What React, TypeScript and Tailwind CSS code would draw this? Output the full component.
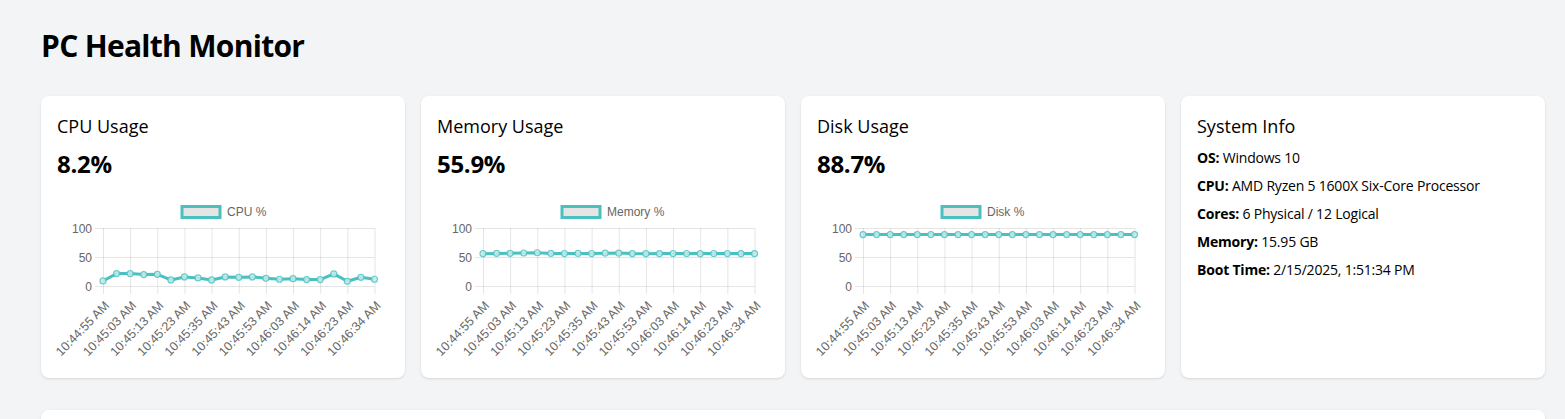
import React from "react";

const times = [
  "10:44:55 AM",
  "10:45:03 AM",
  "10:45:13 AM",
  "10:45:23 AM",
  "10:45:35 AM",
  "10:45:43 AM",
  "10:45:53 AM",
  "10:46:03 AM",
  "10:46:14 AM",
  "10:46:23 AM",
  "10:46:34 AM",
];

const cpuData = [8.7, 21.4, 21.4, 19.7, 20.2, 10.4, 15.6, 13.9, 10.4, 15.6, 15.0, 15.6, 13.3, 11.6, 12.7, 11.0, 11.0, 20.8, 8.1, 15.0, 11.6];
const memData = [55.8, 56.2, 56.4, 56.9, 57.3, 56.2, 56.0, 56.1, 56.0, 56.6, 56.7, 55.9, 55.8, 55.9, 56.0, 56.0, 55.9, 56.0, 56.0, 55.9, 55.9];
const diskData = Array.from({ length: 21 }, () => 88.7);

const TEAL = "rgb(75,192,192)";
const GRID = "rgba(0,0,0,0.1)";

function LineChart({ label, data }: { label: string; data: number[] }) {
  const left = 46;
  const right = 317.5;
  const top = 32;
  const bottom = 90;
  const step = (right - left) / (data.length - 1);
  const yOf = (v: number) => bottom - (v / 100) * (bottom - top);
  const pts = data.map((v, i) => `${left + i * step},${yOf(v)}`).join(" ");

  return (
    <svg
      width={332}
      height={166}
      viewBox="0 0 332 166"
      overflow="visible"
      style={{ fontFamily: "'Liberation Sans', Arial, sans-serif" }}
    >
      {/* legend */}
      <rect x={125} y={10.5} width={38} height={11} fill="rgba(0,0,0,0.1)" stroke={TEAL} strokeWidth={3} />
      <text x={170} y={20} fontSize={12} fill="#666">
        {label}
      </text>

      {/* horizontal grid */}
      {[0, 50, 100].map((v) => (
        <g key={v}>
          <line x1={left - 8} x2={right} y1={yOf(v) + 0.5} y2={yOf(v) + 0.5} stroke={GRID} />
          <text x={35} y={yOf(v) + 4.5} fontSize={12} fill="#666" textAnchor="end">
            {v}
          </text>
        </g>
      ))}

      {/* vertical grid + x labels */}
      {times.map((t, k) => {
        const x = left + k * 2 * step;
        return (
          <g key={t}>
            <line x1={x + 0.5} x2={x + 0.5} y1={top} y2={bottom + 8} stroke={GRID} />
            <text
              transform={`translate(${x + 4.5}, 108) rotate(-46)`}
              fontSize={12.5}
              fill="#666"
              textAnchor="end"
              dominantBaseline="middle"
            >
              {t}
            </text>
          </g>
        );
      })}

      <polyline points={pts} fill="none" stroke={TEAL} strokeWidth={3} strokeLinejoin="round" />
      {data.map((v, i) => (
        <circle
          key={i}
          cx={left + i * step}
          cy={yOf(v)}
          r={3}
          fill="rgba(200,235,235,0.85)"
          stroke="rgba(75,192,192,0.8)"
          strokeWidth={1.2}
        />
      ))}
    </svg>
  );
}

function UsageCard({ title, value, label, data }: { title: string; value: string; label: string; data: number[] }) {
  return (
    <div className="rounded-lg bg-white p-4 shadow">
      <h2 className="mb-2 text-lg font-medium leading-7 text-black">{title}</h2>
      <p className="mb-4 text-2xl font-bold leading-8 tracking-[-0.3px] text-black">{value}</p>
      <LineChart label={label} data={data} />
    </div>
  );
}

function SystemInfo() {
  const rows = [
    ["OS:", "Windows 10"],
    ["CPU:", "AMD Ryzen 5 1600X Six-Core Processor"],
    ["Cores:", "6 Physical / 12 Logical"],
    ["Memory:", "15.95 GB"],
    ["Boot Time:", "2/15/2025, 1:51:34 PM"],
  ];
  return (
    <div className="rounded-lg bg-white p-4 shadow">
      <h2 className="mb-2 text-lg font-medium leading-7 text-black">System Info</h2>
      <div className="flex flex-col gap-2">
        {rows.map(([k, v]) => (
          <p key={k} className="text-sm leading-5 tracking-[-0.2px] text-black">
            <span className="font-bold">{k}</span> {v}
          </p>
        ))}
      </div>
    </div>
  );
}

export default function App() {
  return (
    <div
      className="min-h-screen bg-gray-100 pl-[41px] pr-5 pt-[28px]"
      style={{ fontFamily: "'Open Sans', 'Noto Sans', sans-serif" }}
    >
      <h1 className="mb-8 text-3xl font-bold leading-9 tracking-[-0.7px] text-black">PC Health Monitor</h1>
      <div className="mb-8 grid grid-cols-4 gap-4">
        <UsageCard title="CPU Usage" value="8.2%" label="CPU %" data={cpuData} />
        <UsageCard title="Memory Usage" value="55.9%" label="Memory %" data={memData} />
        <UsageCard title="Disk Usage" value="88.7%" label="Disk %" data={diskData} />
        <SystemInfo />
      </div>
      <div className="h-40 rounded-lg bg-white shadow" />
    </div>
  );
}
